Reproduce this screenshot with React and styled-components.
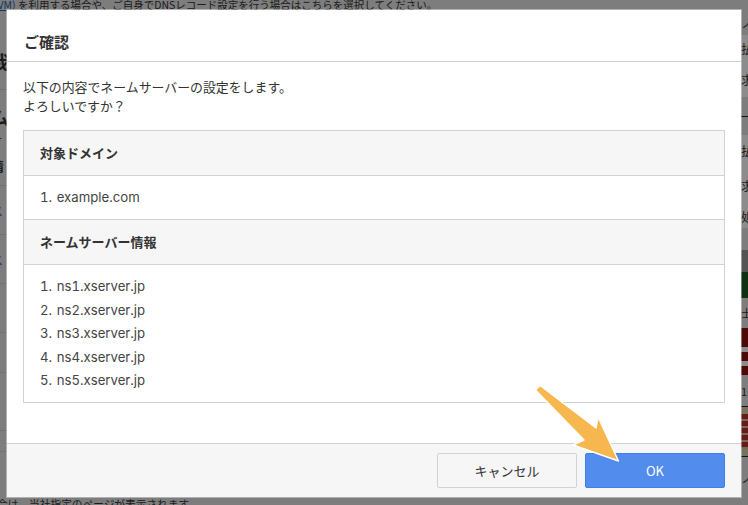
import React from 'react';
import styled, { createGlobalStyle } from 'styled-components';

const GlobalStyle = createGlobalStyle`
    html, body {
        margin: 0;
        padding: 0;
        background: #fff;
    }
    body {
        font-family: "Noto Sans CJK JP", "Liberation Sans", sans-serif;
        color: #333;
    }
`;

// page that sits behind the dialog, only its edges show
const leftRows = [
    { h: 22 },
    { h: 58, text: '我', bold: true, size: 18, line: true },
    { h: 10 },
    { h: 34, text: 'ム', bold: true, size: 18 },
    { h: 12, text: 'サ', size: 11 },
    { h: 40, text: '情', bold: true, size: 13, line: true },
    { h: 49, text: 'ス', size: 12, link: true, dotted: true },
    { h: 49, text: 'ス', size: 12, link: true, dotted: true },
    { h: 49, dotted: true },
    { h: 40, dotted: true },
    { h: 58, line: true },
    { h: 21, line: true },
    { h: 44, text: '9', bold: true, size: 16 },
];

const rightRows = [
    { h: 25, text: 'ノ', size: 12 },
    { h: 27, text: '払', size: 12, tint: true },
    { h: 35, text: '求', size: 12, tint: true },
    { h: 20, line: true, dark: true },
    { h: 18 },
    { h: 30, text: '払', size: 12, tint: true },
    { h: 40, text: '求', size: 12, tint: true },
    { h: 23, text: '処', size: 12, tint: true },
    { h: 22 },
    { h: 48, picture: 'green' },
    { h: 30, text: '士', size: 11 },
    { h: 47, picture: 'red' },
    { h: 32, text: '1', size: 11, line: true, dark: true },
    { h: 50, picture: 'stripes', line: true, dark: true },
    { h: 40, text: 'ノ', size: 12 },
];

const targetList = ['example.com'];
const serverList = ['ns1.xserver.jp', 'ns2.xserver.jp', 'ns3.xserver.jp', 'ns4.xserver.jp', 'ns5.xserver.jp'];

const Strip = ({ rows, align }) => (
    <StripWrap $align={align}>
        {rows.map((row, i) => (
            <StripRow
                key={i}
                $h={row.h}
                $line={row.line}
                $dark={row.dark}
                $dotted={row.dotted}
                $tint={row.tint}
                $picture={row.picture}
                $bold={row.bold}
                $size={row.size}
                $link={row.link}
            >
                {row.text}
            </StripRow>
        ))}
    </StripWrap>
);

const App = () => {
    return (
        <Screen>
            <GlobalStyle />
            <Behind>
                <TopText>
                    <a>(VM)</a> を利用する場合や、ご自身でDNSレコード設定を行う場合はこちらを選択してください。
                </TopText>
                <Middle>
                    <Strip rows={leftRows} align="right" />
                    <Strip rows={rightRows} align="left" />
                </Middle>
                <BottomText>合は、当社指定のページが表示されます。</BottomText>
            </Behind>
            <Shade />
            <Dialog>
                <DialogHeader>ご確認</DialogHeader>
                <DialogBody>
                    <Message>
                        以下の内容でネームサーバーの設定をします。
                        <br />
                        よろしいですか？
                    </Message>
                    <InfoTable>
                        <InfoHead>対象ドメイン</InfoHead>
                        <InfoList $single>
                            {targetList.map((item, i) => (
                                <li key={item}>{i + 1}. {item}</li>
                            ))}
                        </InfoList>
                        <InfoHead>ネームサーバー情報</InfoHead>
                        <InfoList>
                            {serverList.map((item, i) => (
                                <li key={item}>{i + 1}. {item}</li>
                            ))}
                        </InfoList>
                    </InfoTable>
                </DialogBody>
                <DialogFooter>
                    <Button>キャンセル</Button>
                    <Button $primary>OK</Button>
                </DialogFooter>
            </Dialog>
            <Arrow viewBox="0 0 748 505">
                <path
                    d="M535.5 390 L540 385.5 L596 428 L598 417 L618.5 461 L573 445 L584 440 Z"
                    fill="#f6b84e"
                    stroke="#fff"
                    strokeWidth="1.4"
                    strokeLinejoin="round"
                />
            </Arrow>
        </Screen>
    );
};

//Styled Components
const Screen = styled.div`
    position: relative;
    width: 748px;
    height: 505px;
    overflow: hidden;
`;

const Behind = styled.div`
    display: flex;
    flex-direction: column;
    height: 505px;
    background: #e4e4e4;
`;

const TopText = styled.div`
    height: 10px;
    margin-left: -6px;
    font-size: 10.5px;
    line-height: 9px;
    white-space: nowrap;
    a {
        color: #2a5db0;
        text-decoration: underline;
    }
`;

const BottomText = styled.div`
    height: 8px;
    margin-left: -3px;
    padding-top: 1px;
    font-size: 10.7px;
    line-height: 14px;
    white-space: nowrap;
    overflow: hidden;
`;

const Middle = styled.div`
    flex: 1;
    display: flex;
    justify-content: space-between;
    overflow: hidden;
`;

const StripWrap = styled.div`
    width: 7px;
    overflow: hidden;
    display: flex;
    flex-direction: column;
    align-items: ${(p) => (p.$align === 'right' ? 'flex-end' : 'flex-start')};
`;

const pictures = {
    green: 'linear-gradient(#9a9a9a 0 45%, #1d5a22 45% 100%)',
    red: 'linear-gradient(#8c1010 0 40%, #fff 40% 50%, #8c1010 50% 70%, #fff 70% 80%, #8c1010 80% 100%)',
    stripes: 'linear-gradient(#d8d0b0 0 15%, transparent 15% 85%, #d8d0b0 85% 100%), repeating-linear-gradient(#b5342c 0 5px, #e6b9a8 5px 7px)',
};

const StripRow = styled.div`
    flex: none;
    width: 16px;
    height: ${(p) => p.$h}px;
    box-sizing: border-box;
    display: flex;
    align-items: center;
    font-size: ${(p) => p.$size || 12}px;
    font-weight: ${(p) => (p.$bold ? 700 : 400)};
    color: ${(p) => (p.$link ? '#2a5db0' : '#333')};
    background: ${(p) => (p.$picture ? pictures[p.$picture] : p.$tint ? '#fff' : 'transparent')};
    border-bottom: ${(p) => (p.$line ? `1px solid ${p.$dark ? '#222' : '#ccc'}` : p.$dotted ? '1px dotted #bbb' : 'none')};
`;

const Shade = styled.div`
    position: absolute;
    inset: 0;
    background: rgba(0, 0, 0, 0.45);
`;

const Dialog = styled.div`
    position: absolute;
    left: 7px;
    top: 10px;
    width: 734px;
    height: 487px;
    box-sizing: border-box;
    display: flex;
    flex-direction: column;
    background: #fff;
    box-shadow: 0 0 0 1px rgba(255, 255, 255, 0.4);
`;

const DialogHeader = styled.div`
    height: 52px;
    box-sizing: border-box;
    padding-left: 17px;
    border-bottom: 1px solid #d2d2d2;
    font-size: 15px;
    font-weight: 700;
    line-height: 64px;
    color: #333;
`;

const DialogBody = styled.div`
    flex: 1;
    padding: 15px 16px 0;
`;

const Message = styled.p`
    margin: 0 0 15px 0;
    font-size: 12.9px;
    line-height: 19px;
    color: #333;
`;

const InfoTable = styled.div`
    border: 1px solid #d2d2d2;
`;

const InfoHead = styled.div`
    height: 45px;
    box-sizing: border-box;
    padding-left: 16px;
    background: #f6f6f6;
    border-bottom: 1px solid #d2d2d2;
    font-size: 13px;
    font-weight: 700;
    line-height: 44px;
    color: #333;
`;

const InfoList = styled.ol`
    margin: 0;
    padding: ${(p) => (p.$single ? '9px 16px 10px' : '10px 16px 9.5px')};
    list-style: none;
    font-family: Inter, "Noto Sans CJK JP", sans-serif;
    font-size: 13.2px;
    font-weight: 400;
    font-variant-numeric: tabular-nums;
    word-spacing: 1px;
    line-height: ${(p) => (p.$single ? '24px' : '23.5px')};
    color: #444;
    ${(p) => p.$single && 'border-bottom: 1px solid #d2d2d2;'}
`;

const DialogFooter = styled.div`
    height: 54px;
    box-sizing: border-box;
    display: flex;
    justify-content: flex-end;
    gap: 8px;
    padding: 9px 16px 0;
    background: #f6f6f6;
    border-top: 1px solid #d2d2d2;
`;

const Button = styled.button`
    width: 140px;
    height: 35px;
    box-sizing: border-box;
    padding: 0;
    border: 1px solid ${(p) => (p.$primary ? '#3f7fe6' : '#d2d2d2')};
    border-radius: 2px;
    background: ${(p) => (p.$primary ? '#528ced' : '#f6f6f6')};
    color: ${(p) => (p.$primary ? '#fff' : '#333')};
    font-family: inherit;
    font-size: 13px;
`;

const Arrow = styled.svg`
    position: absolute;
    inset: 0;
    width: 748px;
    height: 505px;
    pointer-events: none;
`;

export default App;
